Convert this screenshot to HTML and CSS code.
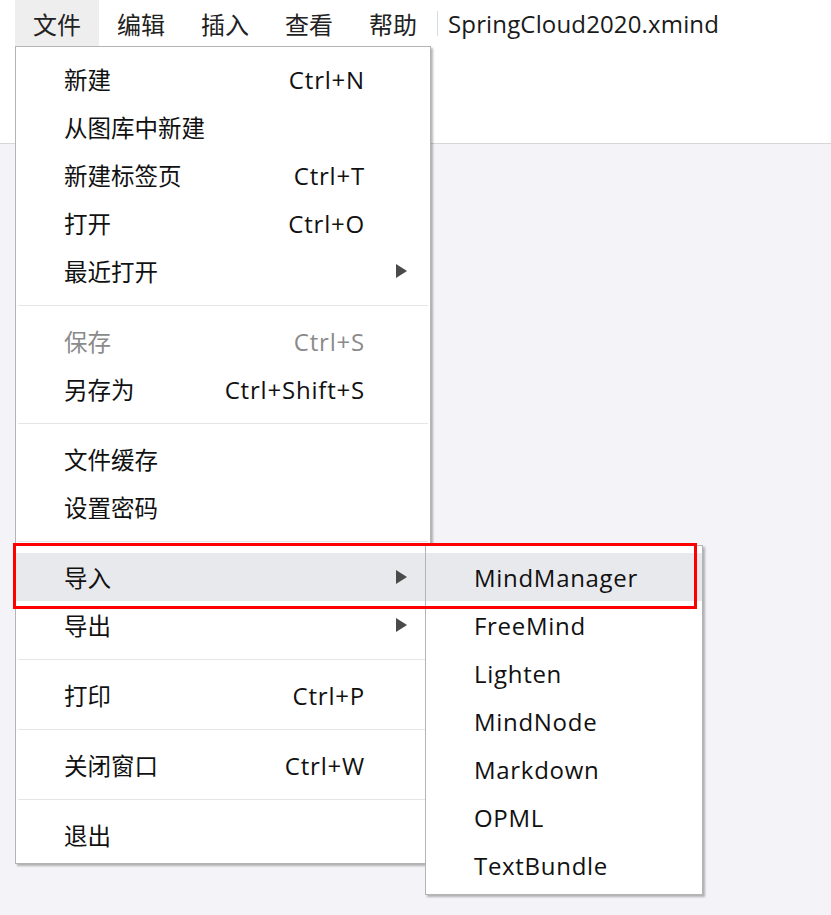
FILE: index.html
```html
<!DOCTYPE html>
<html lang="zh-CN">
<head>
<meta charset="utf-8">
<title>SpringCloud2020.xmind</title>
<link rel="stylesheet" href="styles.css">
</head>
<body>
<div class="app">
  <header class="topbar">
    <nav class="menubar">
      <span class="mitem active">文件</span>
      <span class="mitem">编辑</span>
      <span class="mitem">插入</span>
      <span class="mitem">查看</span>
      <span class="mitem">帮助</span>
      <span class="vsep"></span>
      <span class="doc-title">SpringCloud2020.xmind</span>
    </nav>
  </header>
  <main class="canvas"></main>

  <div class="menu main-menu">
    <div class="row"><span class="label">新建</span><span class="key">Ctrl+N</span></div>
    <div class="row"><span class="label">从图库中新建</span></div>
    <div class="row"><span class="label">新建标签页</span><span class="key">Ctrl+T</span></div>
    <div class="row"><span class="label">打开</span><span class="key">Ctrl+O</span></div>
    <div class="row"><span class="label">最近打开</span><span class="arrow"></span></div>
    <div class="sep"></div>
    <div class="row disabled"><span class="label">保存</span><span class="key">Ctrl+S</span></div>
    <div class="row"><span class="label">另存为</span><span class="key">Ctrl+Shift+S</span></div>
    <div class="sep"></div>
    <div class="row"><span class="label">文件缓存</span></div>
    <div class="row"><span class="label">设置密码</span></div>
    <div class="sep"></div>
    <div class="row hover"><span class="label">导入</span><span class="arrow"></span></div>
    <div class="row"><span class="label">导出</span><span class="arrow"></span></div>
    <div class="sep"></div>
    <div class="row"><span class="label">打印</span><span class="key">Ctrl+P</span></div>
    <div class="sep"></div>
    <div class="row"><span class="label">关闭窗口</span><span class="key">Ctrl+W</span></div>
    <div class="sep"></div>
    <div class="row"><span class="label">退出</span></div>
  </div>

  <div class="menu sub-menu">
    <div class="row hover"><span class="label">MindManager</span></div>
    <div class="row"><span class="label">FreeMind</span></div>
    <div class="row"><span class="label">Lighten</span></div>
    <div class="row"><span class="label">MindNode</span></div>
    <div class="row"><span class="label">Markdown</span></div>
    <div class="row"><span class="label">OPML</span></div>
    <div class="row"><span class="label">TextBundle</span></div>
  </div>

  <div class="annotation"></div>
</div>
</body>
</html>
```
FILE: styles.css
```css
html, body {
  margin: 0;
  padding: 0;
}
body {
  font-family: "Open Sans", "Noto Sans CJK SC", sans-serif;
  font-size: 23px;
  color: #111;
  background: #f4f4f8;
}
.app {
  position: relative;
  width: 831px;
  height: 915px;
  overflow: hidden;
  display: flex;
  flex-direction: column;
}
.topbar {
  height: 143px;
  background: #fff;
  border-bottom: 1px solid #d6d6d8;
  flex: none;
}
.menubar {
  display: flex;
  align-items: center;
  height: 46px;
  padding-left: 15px;
}
.mitem {
  height: 46px;
  width: 84px;
  display: flex;
  align-items: center;
  justify-content: center;
  font-family: "Noto Sans CJK SC", sans-serif;
  font-size: 24px;
  color: #222;
  box-sizing: border-box;
}
.mitem.active {
  background: #eeeeee;
}
.vsep {
  width: 1px;
  height: 25px;
  background: #d3dde8;
  margin-left: 2px;
  margin-right: 11px;
}
.doc-title {
  font-size: 24px;
  color: #1a1a1a;
  letter-spacing: 0.15px;
  margin-left: -1px;
}
.canvas {
  flex: 1;
  background: #f4f4f8;
}
.menu {
  position: absolute;
  background: #fff;
  border: 1px solid #b4b4b4;
  box-shadow: 2px 2px 2px rgba(0, 0, 0, 0.28);
  box-sizing: border-box;
}
.main-menu {
  left: 15px;
  top: 46px;
  width: 416px;
  padding: 8px 0 4px;
}
.sub-menu {
  left: 425px;
  top: 545px;
  width: 278px;
  padding: 7px 0 5px;
}
.row {
  height: 48px;
  display: flex;
  align-items: center;
  padding: 0 23px 0 48px;
}
.row.hover {
  background: #e8e9ed;
}
.row.disabled {
  color: #8b8b8b;
}
.label {
  font-family: "Noto Sans CJK SC", sans-serif;
  font-size: 23.5px;
}
.sub-menu .label {
  font-family: "Open Sans", "Noto Sans CJK SC", sans-serif;
  font-size: 24px;
  letter-spacing: 0.7px;
}
.key {
  margin-left: auto;
  margin-right: 42px;
  font-size: 24px;
  letter-spacing: 0.8px;
}
.arrow {
  margin-left: auto;
  width: 0;
  height: 0;
  border-top: 7px solid transparent;
  border-bottom: 7px solid transparent;
  border-left: 11px solid #4a4a4a;
}
.sep {
  height: 1px;
  background: #e6e6e6;
  margin: 10px 2px 11px;
}
.annotation {
  position: absolute;
  left: 13px;
  top: 543px;
  width: 684px;
  height: 66px;
  border: 3.5px solid #ff0000;
  box-sizing: border-box;
  pointer-events: none;
}
```
